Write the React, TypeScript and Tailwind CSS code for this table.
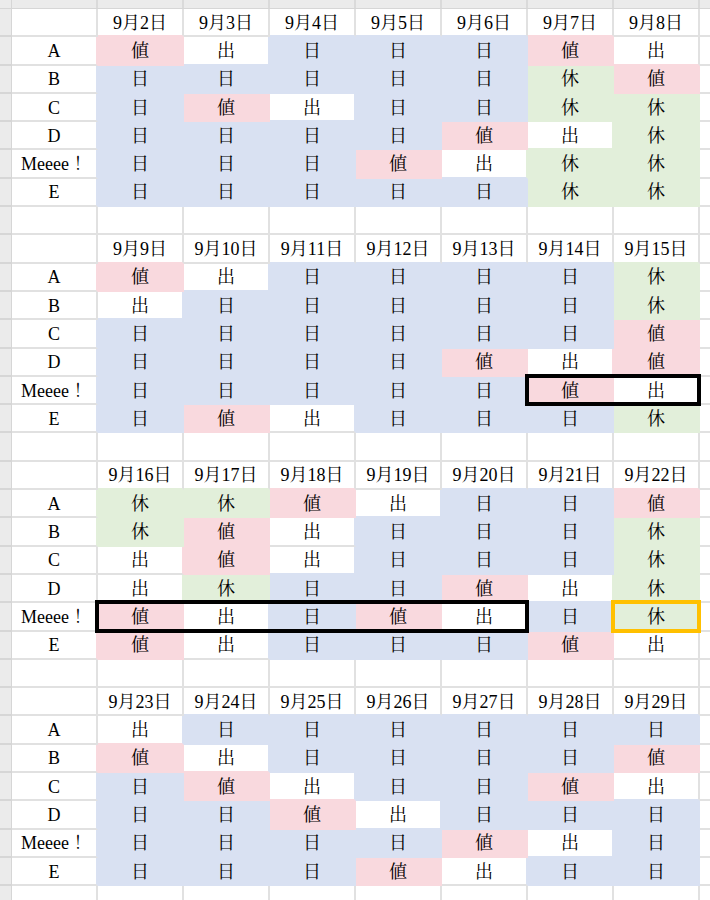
type Code = 'v' | 'o' | 'n' | 'h'

const NAMES = ['A', 'B', 'C', 'D', 'Meeee！', 'E']

// one string per person, 7 days each: v=値 o=出 n=日 h=休
const BLOCKS: { start: number; rows: string[] }[] = [
  { start: 2, rows: ['vonnnvo', 'nnnnnhv', 'nvonnhh', 'nnnnvoh', 'nnnvohh', 'nnnnnhh'] },
  { start: 9, rows: ['vonnnnh', 'onnnnnh', 'nnnnnnv', 'nnnnvov', 'nnnnnvo', 'nvonnnh'] },
  { start: 16, rows: ['hhvonnv', 'hvonnnh', 'ovonnnh', 'ohnnvoh', 'vonvonh', 'vonnnvo'] },
  { start: 23, rows: ['onnnnnn', 'vonnnnv', 'nvonnvo', 'nnvonnn', 'nnnnvon', 'nnnvonn'] },
]

const LABEL: Record<Code, string> = { v: '値', o: '出', n: '日', h: '休' }

const BG: Record<string, string> = {
  v: 'bg-[#f9d9de]',
  n: 'bg-[#d9e1f2]',
  h: 'bg-[#e2efda]',
  none: 'bg-white',
}
const BR: Record<string, string> = {
  v: 'border-r-[#f9d9de]',
  n: 'border-r-[#d9e1f2]',
  h: 'border-r-[#e2efda]',
  none: 'border-r-[#e1e1e1]',
}
const BB: Record<string, string> = {
  v: 'border-b-[#f9d9de]',
  n: 'border-b-[#d9e1f2]',
  h: 'border-b-[#e2efda]',
  none: 'border-b-[#e1e1e1]',
}

// highlighted ranges: row index, first col, last col, colour class
const BOXES = [
  { row: 13, from: 6, to: 7, cls: 'border-black' },
  { row: 21, from: 1, to: 5, cls: 'border-black' },
  { row: 21, from: 7, to: 7, cls: 'border-[#ffc000]' },
]

const ROW_COUNT = 32

function codeAt(r: number, c: number): Code | null {
  if (r < 0 || r >= ROW_COUNT || c < 1 || c > 7) return null
  const k = r % 8
  if (k < 1 || k > 6) return null
  return BLOCKS[Math.floor(r / 8)].rows[k - 1][c - 1] as Code
}

function fillAt(r: number, c: number): string | null {
  const code = codeAt(r, c)
  return code && code !== 'o' ? code : null
}

function textAt(r: number, c: number): string {
  const block = BLOCKS[Math.floor(r / 8)]
  const k = r % 8
  if (k === 7) return ''
  if (k === 0) return c === 0 ? '' : `9月${block.start + c - 1}日`
  if (c === 0) return NAMES[k - 1]
  return LABEL[codeAt(r, c)!]
}

function Cell({ r, c }: { r: number; c: number }) {
  const own = fillAt(r, c)
  const right = own ?? fillAt(r, c + 1) ?? 'none'
  const below = own ?? fillAt(r + 1, c) ?? 'none'
  return (
    <div
      className={`w-[86px] h-full shrink-0 flex items-center justify-center pt-[1px] border-r-2 border-b-2 ${BG[own ?? 'none']} ${BR[right]} ${BB[below]}`}
    >
      {textAt(r, c)}
    </div>
  )
}

function Row({ r }: { r: number }) {
  const parts = []
  let c = 0
  while (c <= 7) {
    const box = BOXES.find((b) => b.row === r && b.from === c)
    if (box) {
      const cols = []
      for (let i = box.from; i <= box.to; i++) cols.push(<Cell key={i} r={r} c={i} />)
      parts.push(
        <div key={c} className="relative flex h-full">
          {cols}
          <div className={`absolute -top-[3px] -left-[3px] -right-[1px] -bottom-[1px] border-4 ${box.cls} z-10 pointer-events-none`} />
        </div>
      )
      c = box.to + 1
    } else {
      parts.push(<Cell key={c} r={r} c={c} />)
      c++
    }
  }
  return (
    <div className="flex h-[28.3px]">
      <div className="w-[12px] shrink-0 bg-[#ebebeb] border-r border-b-2 border-[#d6d6d6]" />
      {parts}
      <div className="flex-1 border-b-2 border-[#e1e1e1]" />
    </div>
  )
}

export default function App() {
  return (
    <div className="w-[710px] h-[900px] overflow-hidden bg-white text-black text-[18px] leading-none [font-family:Liberation_Serif,Noto_Serif_CJK_JP,Noto_Sans_CJK_JP,serif]">
      {/* column header strip */}
      <div className="flex h-[9px] bg-[#ebebeb] border-b border-[#d6d6d6]">
        <div className="w-[12px] shrink-0 border-r border-[#d6d6d6]" />
        {Array.from({ length: 8 }, (_, i) => (
          <div key={i} className="w-[86px] shrink-0 border-r-2 border-[#dadada]" />
        ))}
      </div>
      {Array.from({ length: ROW_COUNT }, (_, r) => (
        <Row key={r} r={r} />
      ))}
    </div>
  )
}
